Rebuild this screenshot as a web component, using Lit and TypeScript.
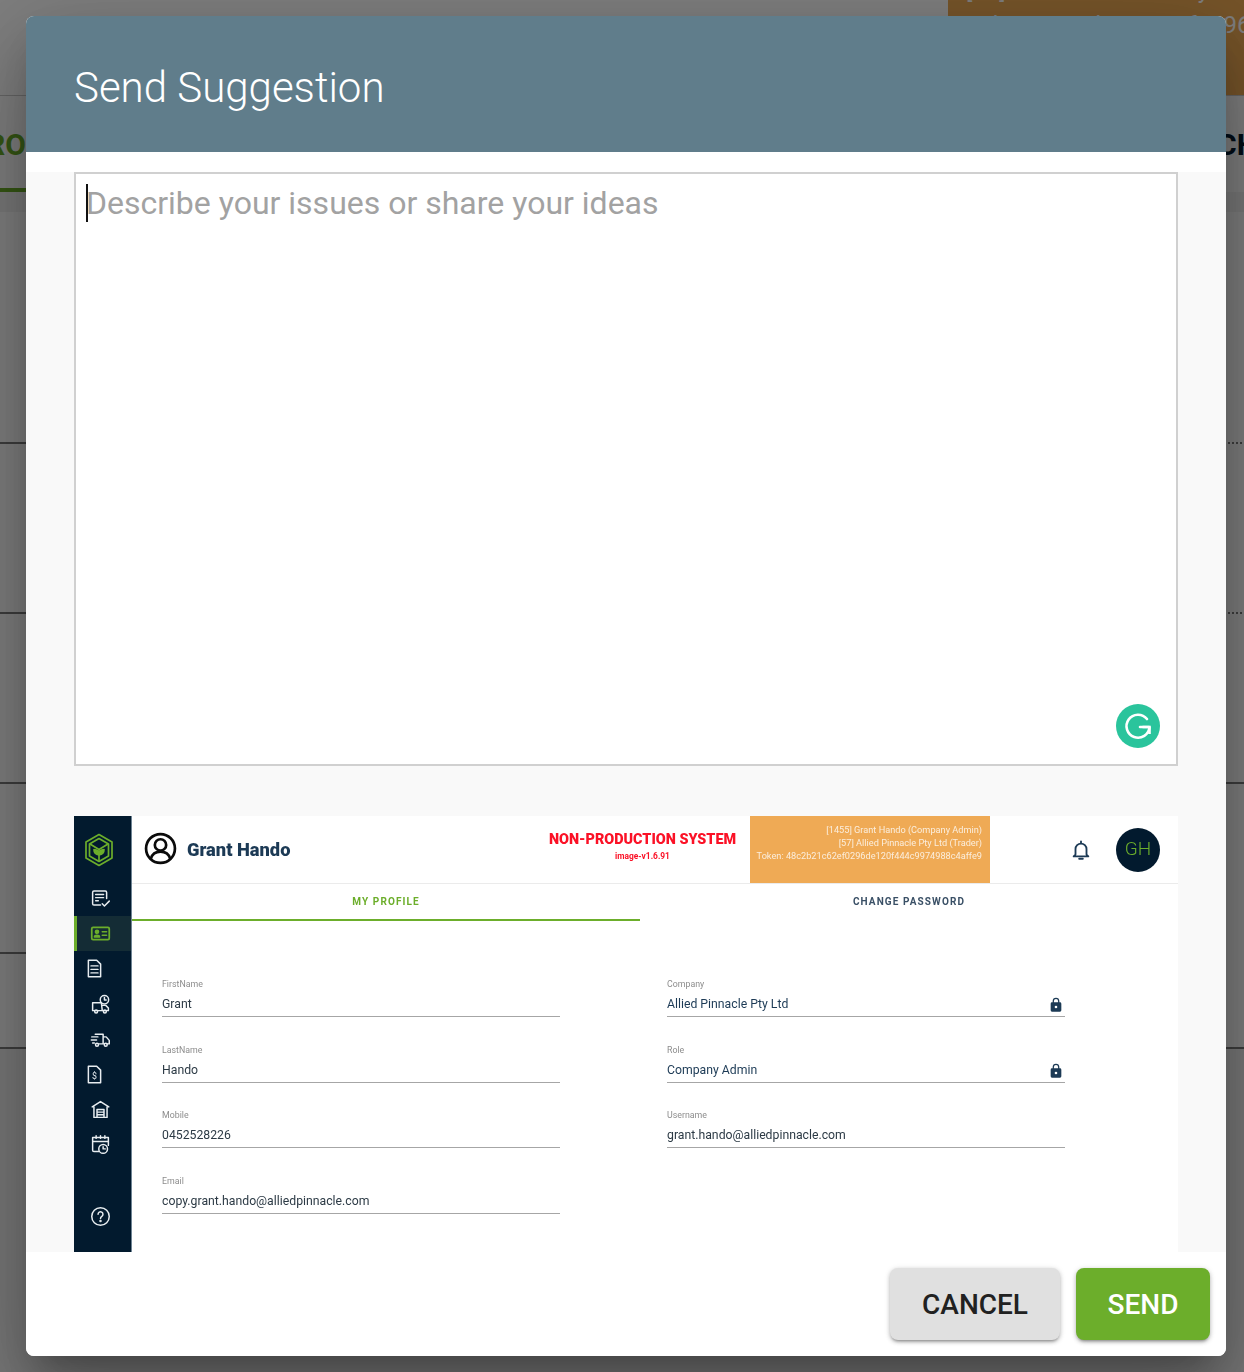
import { LitElement, html, css, svg } from 'lit';
import { customElement } from 'lit/decorators.js';

const icon = (body: unknown, cls = 'nav_icon') => html`<svg class=${cls} viewBox="0 0 24 24" fill="none" stroke="currentColor" stroke-width="1.7" stroke-linecap="round" stroke-linejoin="round">${body}</svg>`;

const NAV = [
  { body: svg`<path d="M19 12V5a1.500 1.500 0 0 0-1.500-1.500h-13A1.500 1.500 0 0 0 3 5v13a1.500 1.500 0 0 0 1.500 1.500H12"/><path d="M6.500 7.500h9M6.500 11h9M6.500 14.500h3"/><path d="M14 18l2.500 2.500L22 15"/>` },
  { active: true, body: svg`<rect x="2" y="5" width="20" height="14" rx="1.500" stroke-width="2"/><circle cx="8" cy="10" r="1.800" fill="currentColor"/><path d="M5 16c.4-2.600 5.600-2.600 6 0z" fill="currentColor"/><path d="M14 10h5M14 14h5"/>` },
  { offset: true, body: svg`<path d="M5 2.500h9.500L19 7v14.500H5z"/><path d="M8 9h8M8 13h8M8 17h8"/>` },
  { body: svg`<path d="M13 10H3v9h11zM14 13h4l3 3v3h-7"/><circle cx="7" cy="20" r="1.700"/><circle cx="17" cy="20" r="1.700"/><circle cx="16.500" cy="6.500" r="4.800"/><path d="M16.500 4v2.800h2"/>` },
  { body: svg`<path d="M6 6h9v11H10M15 9h3.500L22 13v4h-2.500M15 17h1"/><circle cx="8" cy="18" r="1.700"/><circle cx="18" cy="18" r="1.700"/><path d="M2 9h7M1.500 12.500h6M3 16h2"/>` },
  { offset: true, body: svg`<path d="M5 2.500h9.500L19 7v14.500H5z"/><text x="12" y="17" font-size="10" fill="currentColor" stroke="none" text-anchor="middle" font-family="Roboto">$</text>` },
  { body: svg`<path d="M2.500 9L12 3l9.500 6M4.500 9v12h15V9M8 21v-9h8v9M8 15h8M8 18h8"/>` },
  { body: svg`<path d="M10 20H4.500A1.500 1.500 0 0 1 3 18.500V4h18v9M3 8.500h18M7 2v3M12 2v3M17 2v3"/><circle cx="15" cy="17" r="5"/><path d="M15 14.500V17h2.500"/>` },
];

// where the separators of the page behind show on the right of the dialog
const PAGE_ROWS = [
  { height: 232, right: 'dotted' },
  { height: 170, right: 'dotted' },
  { height: 170, right: 'solid' },
  { height: 170, right: 'none' },
  { height: 95, right: 'solid' },
];

@customElement('profile-shot')
class ProfileShot extends LitElement {
  static styles = css`
    :host {
      display: flex;
      height: 436px;
      background: #fff;
      font-family: Roboto, sans-serif;
      overflow: hidden;
      filter: blur(0.4px);
    }

    /*sidebar*/
    .sidebar {
      width: 57px;
      flex: none;
      background: #021a2e;
      border-right: 1px solid #6f8494;
      color: #e8edf0;
      display: flex;
      flex-direction: column;
    }
    .logo {
      height: 65px;
      display: flex;
      align-items: center;
      justify-content: center;
      padding: 2px 7px 0 0;
      box-sizing: border-box;
      color: #6cae2b;
    }
    .logo svg { width: 32px; height: 34px; }
    .nav_item {
      height: 35.2px;
      display: flex;
      align-items: center;
      justify-content: center;
      padding-right: 5px;
      box-sizing: border-box;
    }
    .nav_item_offset { padding-right: 17px; }
    .nav_item_active {
      background: #142c35;
      border-left: 3px solid #6cae2b;
      color: #6cae2b;
      padding-right: 8px;
    }
    .nav_icon { width: 21px; height: 21px; }
    .nav_help { margin-top: 36px; }

    /*main*/
    .main { flex: 1; min-width: 0; display: flex; flex-direction: column; }
    .top {
      height: 68px;
      box-sizing: border-box;
      border-bottom: 1px solid #ebebeb;
      display: flex;
      align-items: center;
      flex: none;
    }
    .user_icon { width: 33px; height: 33px; margin: -3px 0 0 12px; color: #0b0b0b; flex: none; }
    .user_name {
      margin: 0 0 0 10px;
      width: 345px;
      font-size: 18.300px;
      font-weight: 900;
      color: #1c3a55;
      white-space: nowrap;
      flex: none;
    }
    .warning {
      width: 217px;
      flex: none;
      text-align: center;
      color: #fb1126;
      font-weight: 700;
      margin: 0 -1px 0 2px;
      padding-bottom: 5px;
    }
    .warning_title { font-size: 14.400px; font-weight: 900; line-height: 18px; white-space: nowrap; }
    .warning_sub { font-size: 8.400px; line-height: 14px; }
    .token {
      width: 240px;
      height: 67px;
      flex: none;
      background: #efaa55;
      color: #fbeedd;
      font-size: 9.200px;
      line-height: 13px;
      text-align: right;
      padding: 7px 8px 0 0;
      box-sizing: border-box;
      white-space: nowrap;
    }
    .bell { width: 22px; height: 22px; color: #1c3a55; margin-left: 80px; flex: none; }
    .avatar {
      width: 44px;
      height: 44px;
      border-radius: 50%;
      background: #021a2e;
      color: #6cae2b;
      margin-left: 24px;
      padding-bottom: 2px;
      box-sizing: border-box;
      flex: none;
      display: flex;
      align-items: center;
      justify-content: center;
      font-size: 19px;
      font-weight: 300;
    }

    .tabs { display: flex; flex: none; }
    .tab {
      height: 36.500px;
      box-sizing: border-box;
      text-align: center;
      font-size: 10px;
      font-weight: 700;
      letter-spacing: 1.100px;
      line-height: 36px;
      color: #3a5066;
    }
    .tab_active { width: 508px; color: #6cae2b; border-bottom: 2px solid #6cae2b; }
    .tab_other { flex: 1; }

    .form {
      display: grid;
      grid-template-columns: 398px 398px;
      column-gap: 107px;
      row-gap: 23.500px;
      padding: 54.500px 0 0 30px;
    }
    .field { height: 42px; box-sizing: border-box; border-bottom: 1px solid #a6a6a6; position: relative; }
    .field_label { font-size: 8.800px; line-height: 12px; color: #8d8d8d; margin-top: 3px; }
    .field_value { font-size: 12.250px; line-height: 16px; color: #2c3a45; margin-top: 6px; white-space: nowrap; }
    .field_value_locked { color: #1c3a55; }
    .lock { position: absolute; right: 1px; top: 22px; width: 16px; height: 16px; color: #1c3a55; }
  `;

  field(label: string, value: string, locked = false) {
    return html`
      <div class="field">
        <div class="field_label">${label}</div>
        <div class="field_value ${locked ? 'field_value_locked' : ''}">${value}</div>
        ${locked
          ? html`<svg class="lock" viewBox="0 0 24 24" fill="currentColor"><path d="M18 8h-1V6a5 5 0 0 0-10 0v2H6a2 2 0 0 0-2 2v10a2 2 0 0 0 2 2h12a2 2 0 0 0 2-2V10a2 2 0 0 0-2-2zm-6 9a2 2 0 1 1 0-4 2 2 0 0 1 0 4zm3.100-9H8.900V6a3.100 3.100 0 0 1 6.200 0z"/></svg>`
          : ''}
      </div>
    `;
  }

  render() {
    return html`
      <div class="sidebar">
        <div class="logo">
          <svg viewBox="0 0 32 34" fill="none" stroke="currentColor" stroke-width="1.700" stroke-linejoin="round">
            <path d="M16 1.500L29 9v16l-13 7.500L3 25V9z"/>
            <path d="M16 5.500L25.500 11v12L16 28.500 6.500 23V11z"/>
            <path d="M7 11l9 5.500 9-5.500M16 16.500V28"/>
            <path d="M16 22c-3-.5-5-2.500-5-5.500 3 0 5 2 5 5.500zM16 22c3-.5 5-2.500 5-5.500-3 0-5 2-5 5.500z" fill="currentColor"/>
          </svg>
        </div>
        ${NAV.map(
          (item) => html`
            <div class="nav_item ${item.active ? 'nav_item_active' : ''} ${item.offset ? 'nav_item_offset' : ''}">
              ${icon(item.body)}
            </div>
          `
        )}
        <div class="nav_item nav_help">
          ${icon(svg`<circle cx="12" cy="12" r="10"/><path d="M9.200 9.500a2.800 2.800 0 1 1 4.300 2.400c-1 .6-1.500 1.200-1.500 2.300"/><circle cx="12" cy="17.200" r=".6" fill="currentColor"/>`)}
        </div>
      </div>
      <div class="main">
        <div class="top">
          <svg class="user_icon" viewBox="0 0 32 32" fill="none" stroke="currentColor" stroke-width="2.600">
            <circle cx="16" cy="16" r="14"/>
            <circle cx="16" cy="12.500" r="5.500"/>
            <path d="M6.500 26c1.500-5 5-7 9.500-7s8 2 9.500 7"/>
          </svg>
          <div class="user_name">Grant Hando</div>
          <div class="warning">
            <div class="warning_title">NON-PRODUCTION SYSTEM</div>
            <div class="warning_sub">image-v1.6.91</div>
          </div>
          <div class="token">
            [1455] Grant Hando (Company Admin)<br />
            [57] Allied Pinnacle Pty Ltd (Trader)<br />
            Token: 48c2b21c62ef0296de120f444c9974988c4affe9
          </div>
          <svg class="bell" viewBox="0 0 24 24" fill="none" stroke="currentColor" stroke-width="2">
            <path d="M6 17v-6a6 6 0 0 1 12 0v6l2 2H4z" stroke-linejoin="round"/>
            <path d="M12 2.500v2M10 21.500h4" stroke-linecap="round"/>
          </svg>
          <div class="avatar">GH</div>
        </div>
        <div class="tabs">
          <div class="tab tab_active">MY PROFILE</div>
          <div class="tab tab_other">CHANGE PASSWORD</div>
        </div>
        <div class="form">
          ${this.field('FirstName', 'Grant')}
          ${this.field('Company', 'Allied Pinnacle Pty Ltd', true)}
          ${this.field('LastName', 'Hando')}
          ${this.field('Role', 'Company Admin', true)}
          ${this.field('Mobile', '0452528226')}
          ${this.field('Username', 'grant.hando@alliedpinnacle.com')}
          ${this.field('Email', 'copy.grant.hando@alliedpinnacle.com')}
        </div>
      </div>
    `;
  }
}

@customElement('app-root')
class AppRoot extends LitElement {
  static styles = css`
    :host {
      display: block;
      position: relative;
      height: 1372px;
      overflow: hidden;
      font-family: Roboto, sans-serif;
      background: #fff;
    }

    /*page behind the dialog*/
    .page_top { height: 95px; border-bottom: 1px solid #ccc; display: flex; justify-content: flex-end; }
    .page_token {
      width: 296px;
      height: 95px;
      background: #efaa55;
      color: #fff;
      font-size: 24px;
      line-height: 30px;
      padding-left: 18px;
      box-sizing: border-box;
      white-space: nowrap;
      overflow: hidden;
    }
    .page_token_line {
      margin: -25px 0 5px;
      padding-right: 18px;
      text-align: right;
    }
    .page_tabs {
      height: 116px;
      box-sizing: border-box;
      border-bottom: 20px solid #f2f2f2;
      display: flex;
      justify-content: space-between;
      font-size: 30px;
      font-weight: 700;
      line-height: 98px;
      overflow: hidden;
    }
    .page_tab_left { color: #6cae2b; border-bottom: 4px solid #6cae2b; width: 26px; height: 96px; box-sizing: border-box; text-indent: -14px; white-space: nowrap; }
    .page_tab_right { color: #021a2e; width: 27px; white-space: nowrap; }
    .page_row { display: flex; box-sizing: border-box; }
    .page_line { flex: 1; border-bottom: 2px solid #7c7c7c; }
    .page_line_dotted { border-bottom-style: dotted; margin-right: 2px; }
    .page_line_none { border-bottom-color: transparent; }
    .page_footer { height: 400px; background: #f2f2f2; }

    .backdrop { position: absolute; inset: 0; background: rgba(0, 0, 0, 0.5); }

    /*dialog*/
    .dialog {
      position: absolute;
      left: 26px;
      top: 16px;
      width: 1200px;
      height: 1340px;
      background: #fff;
      border-radius: 8px;
      display: flex;
      flex-direction: column;
      overflow: hidden;
      box-shadow: 0 22px 30px -14px rgba(0, 0, 0, 0.25), 0 48px 76px 6px rgba(0, 0, 0, 0.18), 0 18px 92px 16px rgba(0, 0, 0, 0.14);
    }
    .dialog_header {
      height: 136px;
      flex: none;
      background: #607d8b;
      display: flex;
      align-items: center;
      padding: 6px 0 0 48px;
      box-sizing: border-box;
      color: #fff;
      font-size: 42px;
      font-weight: 300;
    }
    .dialog_body {
      flex: 1;
      margin-top: 20px;
      background: #f9f9f9;
      padding: 0 48px;
      display: flex;
      flex-direction: column;
      min-height: 0;
    }
    .suggestion { position: relative; height: 594px; flex: none; }
    .suggestion_input {
      display: block;
      width: 100%;
      height: 100%;
      box-sizing: border-box;
      border: 2px solid #d0d0d0;
      background: #fff;
      padding: 7px 10px;
      margin: 0;
      resize: none;
      outline: none;
      font-family: Roboto, sans-serif;
      font-size: 32px;
      line-height: 44px;
    }
    .suggestion_input::placeholder { color: #a2a2a2; opacity: 1; }
    .caret { position: absolute; left: 12px; top: 12px; width: 2px; height: 38px; background: #111; }
    .grammarly { position: absolute; right: 18px; bottom: 18px; width: 44px; height: 44px; }
    profile-shot { margin-top: 50px; }

    .dialog_actions {
      height: 104px;
      flex: none;
      display: flex;
      justify-content: flex-end;
      gap: 16px;
      padding: 16px 16px 16px 0;
      box-sizing: border-box;
      background: #fff;
    }
    .action {
      height: 72px;
      border: none;
      border-radius: 8px;
      font-family: Roboto, sans-serif;
      font-size: 28px;
      font-weight: 500;
      box-shadow: 0 3px 3px -2px rgba(0, 0, 0, 0.3), 0 2px 4px 0 rgba(0, 0, 0, 0.2), 0 1px 6px 0 rgba(0, 0, 0, 0.12);
    }
    .action_cancel { width: 170px; background: #e0e0e0; color: #212121; }
    .action_send { width: 134px; background: #6cae2b; color: #fff; }
  `;

  render() {
    return html`
      <div class="page_top">
        <div class="page_token">
          <div class="page_token_line">[57] Allied Pinnacle Pty Ltd (Trader)</div>
          Token: 48c2b21c62ef0296de120f444c
        </div>
      </div>
      <div class="page_tabs">
        <div class="page_tab_left">RO</div>
        <div class="page_tab_right">CH</div>
      </div>
      ${PAGE_ROWS.map(
        (row) => html`
          <div class="page_row" style="height:${row.height}px">
            <div class="page_line"></div>
            <div class="page_line page_line_${row.right}"></div>
          </div>
        `
      )}
      <div class="page_footer"></div>
      <div class="backdrop"></div>
      <div class="dialog">
        <div class="dialog_header">Send Suggestion</div>
        <div class="dialog_body">
          <div class="suggestion">
            <textarea class="suggestion_input" placeholder="Describe your issues or share your ideas"></textarea>
            <div class="caret"></div>
            <svg class="grammarly" viewBox="0 0 44 44">
              <circle cx="22" cy="22" r="22" fill="#2ac49c"/>
              <path d="M31 15a11.500 11.500 0 1 0 2.500 8H24" fill="none" stroke="#fff" stroke-width="2.600" stroke-linecap="round"/>
              <path d="M33.500 23v7M33.500 23h-7" fill="none" stroke="#fff" stroke-width="2.600"/>
            </svg>
          </div>
          <profile-shot></profile-shot>
        </div>
        <div class="dialog_actions">
          <button class="action action_cancel">CANCEL</button>
          <button class="action action_send">SEND</button>
        </div>
      </div>
    `;
  }
}
